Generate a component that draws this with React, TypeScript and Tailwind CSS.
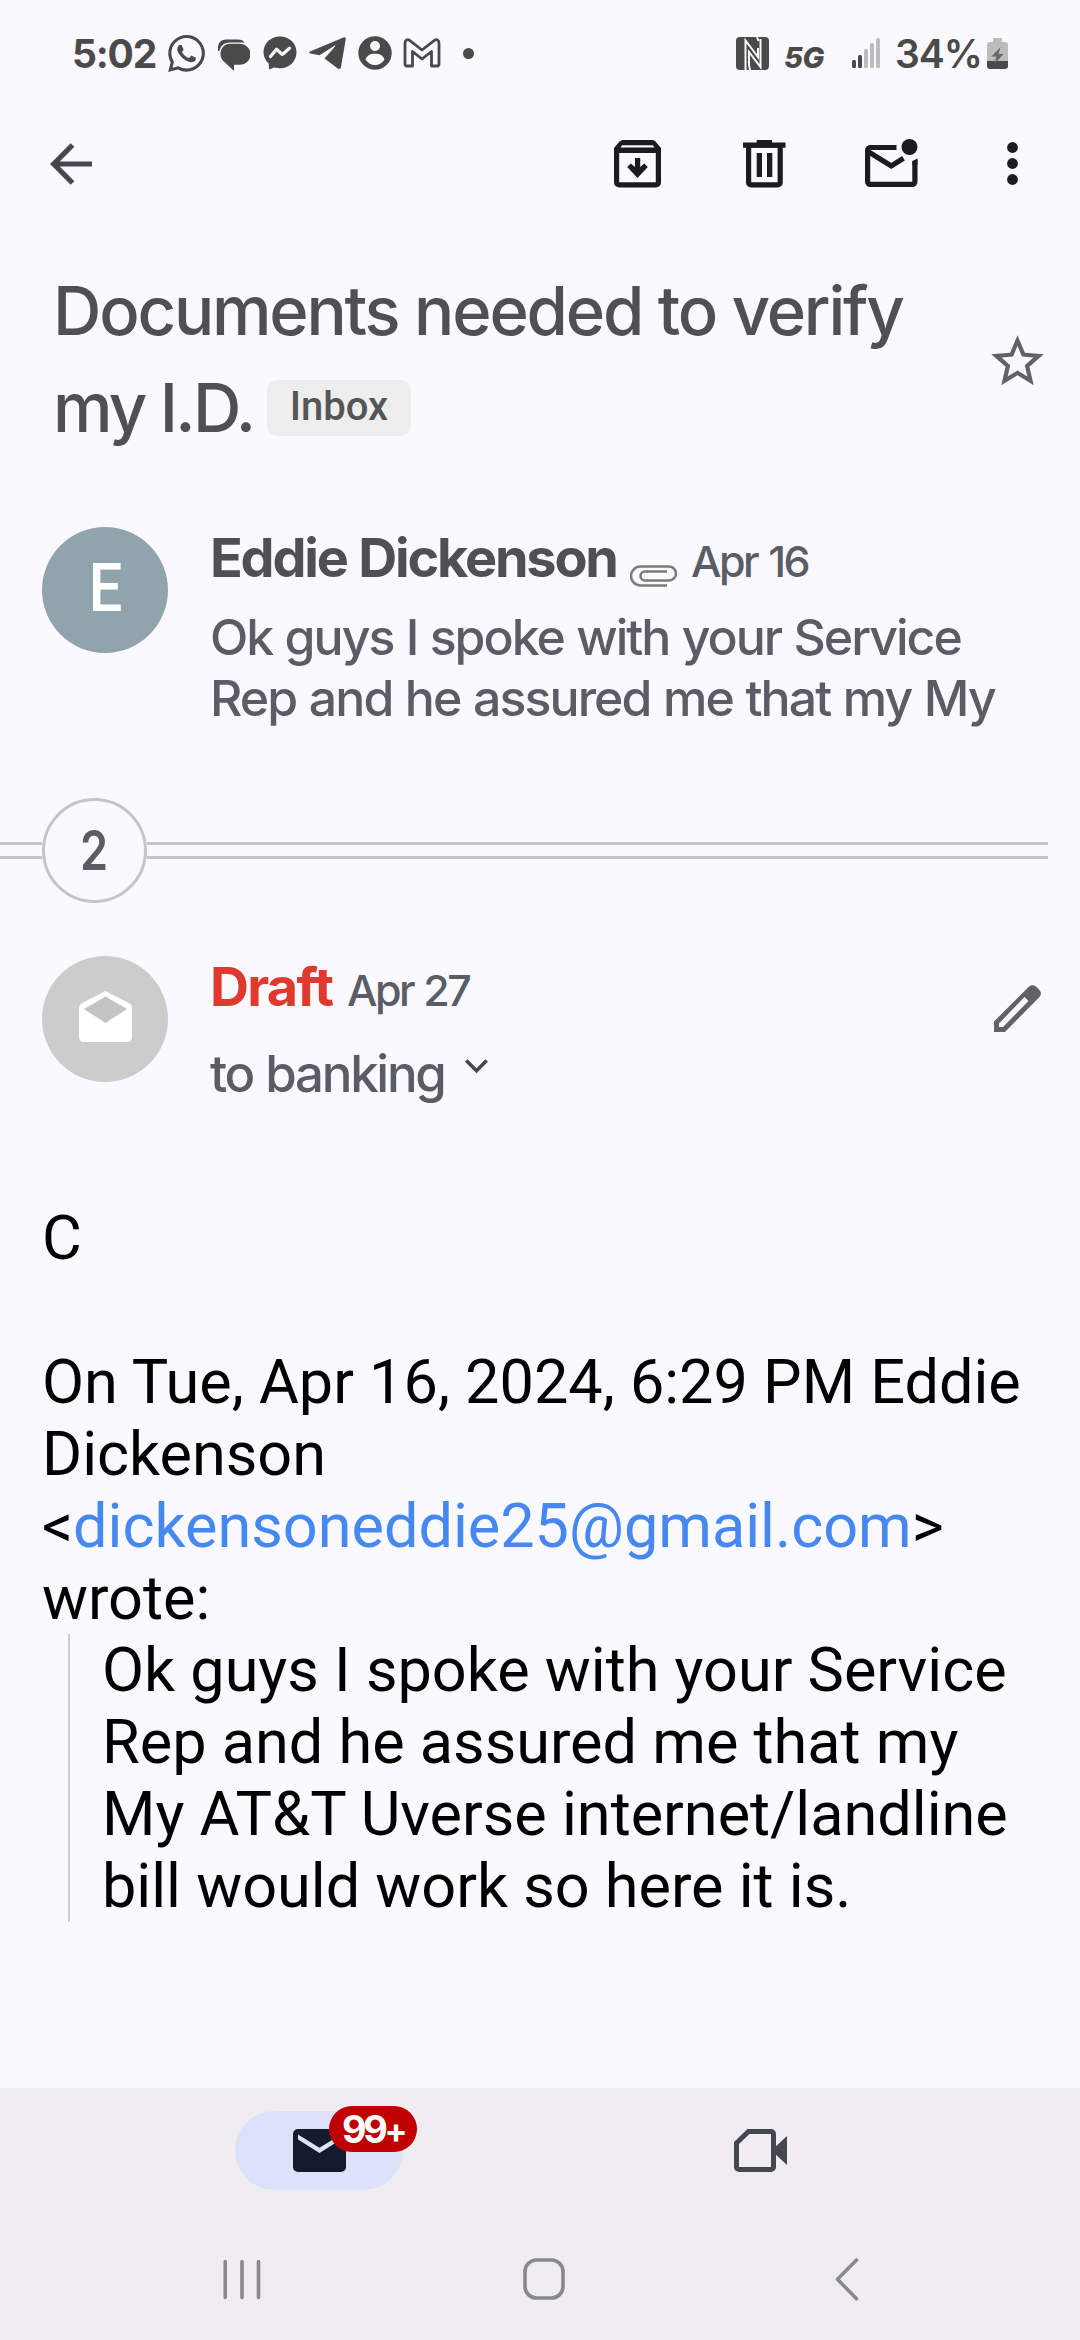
import type { ReactNode } from 'react';
import { SiWhatsapp } from 'react-icons/si';

const GREY = '#4a4a4a';

const quoteLines = [
  'Ok guys I spoke with your Service',
  'Rep and he assured me that my',
  'My AT&T Uverse internet/landline',
  'bill would work so here it is.',
];

function StatusBar() {
  return (
    <div className="flex h-[106px] shrink-0 items-center text-[#4a4a4a]">
      <span className="ml-[72px] w-[96px] whitespace-nowrap text-[39px] leading-none font-bold tracking-[-1.200px]">5:02</span>
      <SiWhatsapp className="h-[37px] w-[37px] shrink-0" />
      {/* chat bubbles */}
      <svg className="mt-[3px] ml-[13px] shrink-0" width="32" height="32" viewBox="0 0 32 32" fill={GREY}>
        <path d="M0 12V9C0 4 3 .5 8 .5h12c3 0 5.500 1.200 6.500 3H12C6 3.500 2.500 7 1.500 12z" />
        <path d="M12 4.800h10a10.500 10.500 0 0 1 0 21h-6V32l-8.500-8C4.500 22 2.500 19 2.500 15.300 2.500 9 6.500 4.800 12 4.800z" />
      </svg>
      {/* messenger */}
      <svg className="ml-[13px] shrink-0" width="34" height="34" viewBox="0 0 34 34">
        <path d="M17 .5C7.500.5.500 7.300.5 16.300c0 4.700 2 8.500 5.200 11.300l.3 5.900 5.200-2c1.800.5 3.800.8 5.800.8 9.500 0 16.500-7 16.500-16S26.500.5 17 .5z" fill={GREY} />
        <path d="M7.500 20.500l6-7.200 5.800 5.200 7.200-6.200" fill="none" stroke="#faf9ff" strokeWidth="3.200" strokeLinejoin="round" strokeLinecap="round" />
      </svg>
      {/* telegram */}
      <svg className="ml-[12px] shrink-0" width="37" height="34" viewBox="0 0 37 34" fill={GREY}>
        <path d="M1 15.500L34.500 1.500c1.500-.6 2.500.3 2.200 2L32 31c-.4 2-1.700 2.400-3.200 1.400L15.500 22.500 26 10.500c.7-.8-.2-1.200-1-.6L10.500 19.300 1.300 17.500C-.3 17-.3 16 1 15.500z" />
      </svg>
      {/* account */}
      <svg className="ml-[12px] shrink-0" width="34" height="34" viewBox="0 0 34 34">
        <circle cx="17" cy="17" r="16.700" fill={GREY} />
        <circle cx="17" cy="10" r="5" fill="#faf9ff" />
        <path d="M7.500 23.500c1.500-4.500 5-5.700 9.500-5.700s8 1.200 9.500 5.700C24.500 27 21 29 17 29s-7.500-2-9.500-5.500z" fill="#faf9ff" />
      </svg>
      {/* gmail */}
      <svg className="ml-[11px] shrink-0" width="38" height="30" viewBox="0 0 38 30" fill="none" stroke={GREY} strokeWidth="2.800" strokeLinejoin="round">
        <path d="M2 26V5c0-3 2.500-4.200 4.600-2.700L19 12 31.400 2.300C33.500.8 36 2 36 5v21c0 1.400-.6 2-2 2h-5.500V13.500L19 21l-9.500-7.500V28H4c-1.400 0-2-.6-2-2z" />
      </svg>
      <span className="ml-[22px] h-[11px] w-[11px] rounded-full bg-[#4a4a4a]" />

      {/* nfc */}
      <svg className="ml-auto shrink-0" width="33" height="33" viewBox="0 0 33 33">
        <rect width="33" height="33" rx="4" fill={GREY} />
        <path d="M9.500 33V3.500L22 20V11M21 0l1.500 4M24.500 2v28L13 15v13l1 5" fill="none" stroke="#faf9ff" strokeWidth="2" />
      </svg>
      <span className="mt-[9px] ml-[15px] w-[48px] whitespace-nowrap text-[29px] leading-none font-extrabold italic tracking-[-0.300px]">5G</span>
      <svg className="mr-[15px] ml-[20px] shrink-0" width="28" height="30" viewBox="0 0 28 30" fill="#bcbcbc">
        <rect x="0" y="22" width="4" height="8" rx="1.500" fill={GREY} />
        <rect x="6" y="17" width="4" height="13" rx="1.500" fill={GREY} />
        <rect x="12" y="11" width="4" height="19" rx="1.500" />
        <rect x="18" y="5" width="4" height="25" rx="1.500" />
        <rect x="24" y="0" width="4" height="30" rx="1.500" />
      </svg>
      <span className="w-[92px] whitespace-nowrap text-[39px] leading-none font-semibold tracking-[-1px]">34%</span>
      <svg className="mr-[72px] shrink-0" width="21" height="31" viewBox="0 0 21 31">
        <path d="M6 0h9v4h3c2 0 3 1 3 3v16H0V7c0-2 1-3 3-3h3z" fill="#bcbcbc" />
        <path d="M0 23h21v5c0 2-1 3-3 3H3c-2 0-3-1-3-3z" fill={GREY} />
        <path d="M13.500 9L4.500 18.500h5L7.500 26l9-10h-5z" fill="#686868" />
      </svg>
    </div>
  );
}

function IconButton({ label, children, className }: { label: string; children: ReactNode; className?: string }) {
  return (
    <button aria-label={label} className={className}>
      {children}
    </button>
  );
}

function Toolbar() {
  return (
    <div className="flex h-[115px] shrink-0 items-center text-[#1c1b1f]">
      <IconButton label="Back" className="ml-[50px]">
        <svg width="42" height="42" viewBox="0 0 42 42" fill="none" stroke="#44474f" strokeWidth="5.200">
          <path d="M42 21H4M22.500 2L3.700 21l18.800 19" />
        </svg>
      </IconButton>
      <IconButton label="Archive" className="ml-auto">
        <svg width="48" height="48" viewBox="0 0 48 48">
          <path fillRule="evenodd" fill="currentColor" d="M8.500 0h30.500l2.500 1.500L47 8v34.500a5 5 0 0 1-5 5H5a5 5 0 0 1-5-5V8l5.500-6.500zM8 5.200L6.500 7.500h34L39 5.200zM5.200 13v29.300h36.600V13z" />
          <path fill="currentColor" d="M21 18h5.200v9l4-3.500 3.600 3.600L23.500 38 13.200 27.100l3.600-3.600 4.200 3.500z" />
        </svg>
      </IconButton>
      <IconButton label="Delete" className="ml-[81px]">
        <svg width="43" height="48" viewBox="0 0 43 48" fill="currentColor">
          <path d="M0 2.500h13.700V0H29v2.500h13.500v5.200H0z" />
          <path fillRule="evenodd" d="M3 6h36.800v36.500a5 5 0 0 1-5 5H8a5 5 0 0 1-5-5zm5.200 1.700v34.600h26.400V7.700z" />
          <path d="M13.700 13H19v24h-5.300zM24 13h5.300v24H24z" />
        </svg>
      </IconButton>
      <IconButton label="Mark unread" className="ml-[79px]">
        <svg width="54" height="50" viewBox="0 0 54 50">
          <path fill="none" stroke="currentColor" strokeWidth="5.200" d="M31.500 8.500H5.200a2.600 2.600 0 0 0-2.600 2.600v31.600a2.600 2.600 0 0 0 2.600 2.600h42.100a2.600 2.600 0 0 0 2.600-2.600V20M3 12.500L26.300 27l12.200-7.700" />
          <circle cx="44.500" cy="8" r="8" fill="currentColor" />
          <path d="M40 17.500l13-1v4.500l-6 1.500z" fill="#faf9ff" />
          <path d="M47.300 22l5.200-2.500v6h-5.200z" fill="currentColor" />
        </svg>
      </IconButton>
      <IconButton label="More" className="mr-[62px] ml-[88px]">
        <svg width="11" height="43" viewBox="0 0 11 43" fill="currentColor">
          <circle cx="5.500" cy="5.500" r="5.400" />
          <circle cx="5.500" cy="21.500" r="5.400" />
          <circle cx="5.500" cy="37.500" r="5.400" />
        </svg>
      </IconButton>
    </div>
  );
}

function Subject() {
  return (
    <div className="mt-[41px] flex h-[194px] items-start pl-[53px]">
      <h1 className="text-[67px] leading-[97px] font-medium whitespace-nowrap text-[#504f54]">
        <span className="block tracking-[-2.200px]">Documents needed to verify</span>
        <span className="flex items-center">
          <span className="w-[214px] tracking-[-2.700px]">my I.D.</span>
          <span className="flex h-[56px] w-[144px] items-center justify-center rounded-[10px] bg-[#eeeeee] pb-[1px] font-['Roboto',sans-serif] text-[40px] leading-none font-medium text-[#555555]">
            Inbox
          </span>
        </span>
      </h1>
      <svg className="mt-[68px] mr-[31px] ml-auto shrink-0" width="63" height="63" viewBox="0 0 24 24" fill="#5f6368">
        <path d="M22 9.240l-7.190-.62L12 2 9.190 8.630 2 9.240l5.460 4.730L5.820 21 12 17.270 18.180 21l-1.630-7.030L22 9.240zM12 15.400l-3.760 2.270 1-4.280-3.320-2.880 4.380-.38L12 6.100l1.710 4.040 4.380.38-3.320 2.880 1 4.280L12 15.400z" />
      </svg>
    </div>
  );
}

function CollapsedMessage() {
  return (
    <div className="mt-[71px] flex h-[201px] pl-[42px]">
      <div className="flex h-[126px] w-[126px] shrink-0 items-center justify-center rounded-full bg-[#90a4ae] pb-[3px] pl-[2px] font-['Roboto',sans-serif] text-[66px] leading-none font-medium text-white">
        <span className="block scale-x-90">E</span>
      </div>
      <div className="mt-[1px] ml-[42px] font-medium whitespace-nowrap text-[#5a5c66]">
        <div className="flex h-[60px] items-baseline leading-[60px]">
          <span className="w-[420px] text-[54px] font-bold tracking-[-2.200px] [word-spacing:1px] text-[#504f54]">Eddie Dickenson</span>
          <svg className="relative top-[10px] shrink-0" width="47" height="22" viewBox="0 0 47 22" fill="none" stroke="#7b7b7b" strokeWidth="2.500">
            <path d="M37 20.500H10.500a9.500 9.500 0 0 1 0-19H39a7 7 0 0 1 0 14H15a4.500 4.500 0 0 1 0-9h22" />
          </svg>
          <span className="ml-[14px] text-[43px] tracking-[-2.500px] [word-spacing:2px]">Apr 16</span>
        </div>
        <p className="mt-[19px] text-[50px] leading-[61px] [word-spacing:1px]">
          <span className="block tracking-[-2px]">Ok guys I spoke with your Service</span>
          <span className="block tracking-[-1.900px]">Rep and he assured me that my My</span>
        </p>
      </div>
    </div>
  );
}

function CountDivider() {
  return (
    <div className="mt-[70px] flex h-[105px] items-center">
      <div className="h-[17px] w-[42px] border-y-[3px] border-[#c0c7cb]" />
      <div className="flex h-[105px] w-[105px] items-center justify-center rounded-full border-[3px] border-[#c0c7cb] text-[55px] leading-none font-semibold text-[#5a5c66]">
        <span className="block scale-x-[.82]">2</span>
      </div>
      <div className="mr-[32px] h-[17px] flex-1 border-y-[3px] border-[#c0c7cb]" />
    </div>
  );
}

function DraftHeader() {
  return (
    <div className="mt-[53px] flex h-[148px] pl-[42px]">
      <div className="flex h-[126px] w-[126px] shrink-0 items-center justify-center rounded-full bg-[#cccccc] pb-[6px]">
        <svg width="53" height="51" viewBox="0 0 53 51">
          <path fill="#ffffff" d="M26.500 0L50 12c2 1.200 3 3 3 5v29c0 3-2 5-5 5H5c-3 0-5-2-5-5V17c0-2 1-3.800 3-5z" />
          <path fill="#c4c4c4" d="M26.500 5.500L48 18 26.500 32 5 18z" />
        </svg>
      </div>
      <div className="mt-[1px] ml-[42px] font-medium whitespace-nowrap text-[#5a5c66]">
        <div className="flex h-[60px] items-baseline leading-[60px]">
          <span className="w-[137px] text-[54px] font-bold tracking-[-1.700px] text-[#e0392e]">Draft</span>
          <span className="text-[43px] tracking-[-2.500px] [word-spacing:1px]">Apr 27</span>
        </div>
        <div className="mt-[26px] flex text-[51px] leading-[61px]">
          <span className="w-[255px] tracking-[-2.300px] [word-spacing:1px]">to banking</span>
          <svg className="mt-[16px]" width="23" height="15" viewBox="0 0 23 15" fill="none" stroke="#44474f" strokeWidth="3.600">
            <path d="M1.300 1.500l10.200 10.300L21.700 1.500" />
          </svg>
        </div>
      </div>
      <svg className="mt-[29px] mr-[38px] ml-auto shrink-0" width="48" height="48" viewBox="0 0 48 48">
        <path
          fill="#5f6368"
          fillRule="evenodd"
          d="M0 47V36.500L34.500 2c2.500-2.500 5.500-2.500 8 0l2.500 2.500c2.500 2.500 2.500 5.500 0 8L11 47zM5 38.500V42h4l25.500-26-4-4z"
        />
      </svg>
    </div>
  );
}

function MessageBody() {
  return (
    <div className="mt-[98px] pl-[42px] font-['Roboto',sans-serif] text-[61.2px] leading-[72px] whitespace-nowrap text-black">
      <p>C</p>
      <p className="mt-[72px]">On Tue, Apr 16, 2024, 6:29 PM Eddie</p>
      <p>Dickenson</p>
      <p>
        &lt;<span className="text-[#4688f1]">dickensoneddie25@gmail.com</span>&gt;
      </p>
      <p>wrote:</p>
      <blockquote className="ml-[26px] border-l-2 border-[#cccccc] pl-[32px]">
        {quoteLines.map((line) => (
          <p key={line}>{line}</p>
        ))}
      </blockquote>
    </div>
  );
}

function BottomBar() {
  return (
    <div className="mt-auto h-[252px] shrink-0 bg-[#efedf1]">
      <div className="flex h-[126px] items-start pt-[23px]">
        <div className="relative ml-[235px] flex h-[79px] w-[168px] items-center justify-center rounded-full bg-[#dbe2f9]">
          <svg width="53" height="43" viewBox="0 0 53 43">
            <rect width="53" height="43" rx="5" fill="#151b2c" />
            <path d="M5 5.500v5L26.500 24 48 10.500v-5L26.500 18.800z" fill="#dbe2f9" />
          </svg>
          <span className="absolute top-[-5px] left-[94px] flex h-[46px] w-[88px] items-center justify-center rounded-full bg-[#c00000] text-[38px] leading-none font-bold tracking-[-3.500px] text-white">
            99<span className="mt-[4px] text-[34px]">+</span>
          </span>
        </div>
        <svg className="mt-[18px] ml-[331px]" width="54" height="43" viewBox="0 0 54 43">
          <path d="M14.500 2.500H37a2.500 2.500 0 0 1 2.500 2.500v33a2.500 2.500 0 0 1-2.500 2.500H5A2.500 2.500 0 0 1 2.500 38V14z" fill="none" stroke="#454750" strokeWidth="5" />
          <path d="M39 20L53 7v29L39 23z" fill="#454750" />
        </svg>
      </div>
      <div className="flex h-[126px] items-start pt-[45px]">
        <svg className="ml-[223px]" width="38" height="42" viewBox="0 0 38 42" stroke="#8a8a8a" strokeWidth="3.600" strokeLinecap="round">
          <path d="M2.200 2.500v36M19 2.500v36M35.500 2.500v36" />
        </svg>
        <svg className="mt-[-1px] ml-[262px]" width="42" height="42" viewBox="0 0 42 42" fill="none" stroke="#8a8a8a" strokeWidth="3.600">
          <rect x="2" y="2" width="38" height="38" rx="11.500" />
        </svg>
        <svg className="mt-[-1px] ml-[270px]" width="24" height="43" viewBox="0 0 24 43" fill="none" stroke="#8a8a8a" strokeWidth="3.600" strokeLinecap="round" strokeLinejoin="round">
          <path d="M21.500 2L2.500 21.300l19 19.500" />
        </svg>
      </div>
    </div>
  );
}

export default function App() {
  return (
    <div className="flex h-[2340px] w-[1080px] flex-col overflow-hidden bg-[#faf9ff] font-['Inter',sans-serif]">
      <StatusBar />
      <Toolbar />
      <Subject />
      <CollapsedMessage />
      <CountDivider />
      <DraftHeader />
      <MessageBody />
      <BottomBar />
    </div>
  );
}
